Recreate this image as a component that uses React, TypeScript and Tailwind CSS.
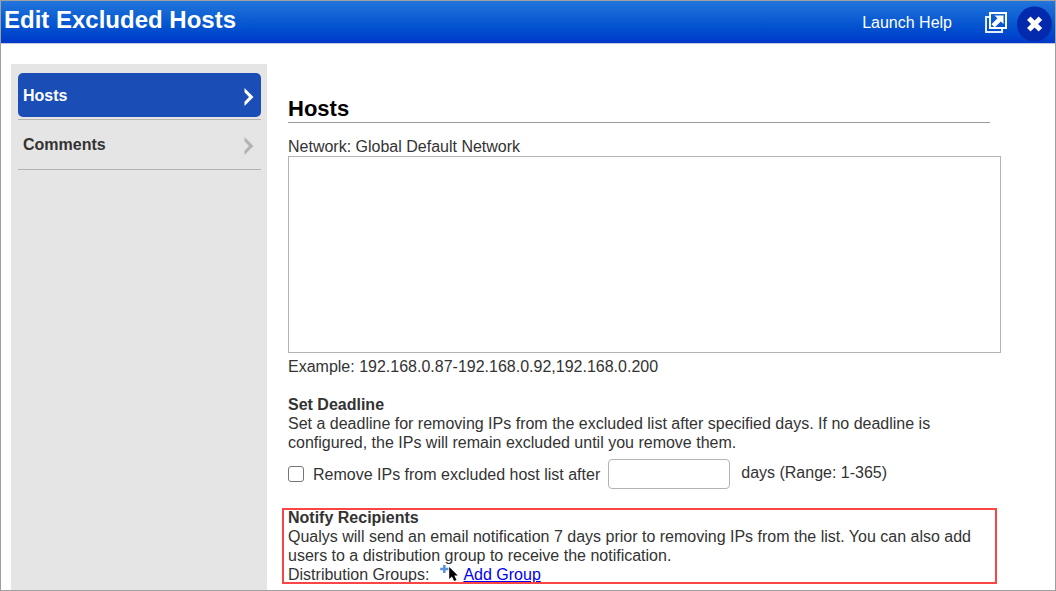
import { useState } from "react";

const sections = ["Hosts", "Comments"];

const PopOutIcon = () => (
  <svg width="22" height="21" viewBox="0 0 22 21" fill="none" aria-hidden="true">
    <path d="M4 5H1V20H17V17" stroke="#e4edfb" strokeWidth="2" />
    <rect x="5" y="1" width="16" height="15" stroke="#fff" strokeWidth="2" />
    <path d="M9.5 3.5h9V12l-2.8-2.6-6 6L6.5 12.2l6-6z" fill="#fff" />
  </svg>
);

const CloseIcon = () => (
  <svg width="35" height="36" viewBox="0 0 35 36" fill="none" aria-hidden="true">
    <circle cx="17.5" cy="18" r="17.5" fill="#0329ac" />
    <path d="M11.8 12.2L23.4 23.8M23.4 12.2L11.8 23.8" stroke="#fff" strokeWidth="5" />
  </svg>
);

const ChevronIcon = () => (
  <svg width="10" height="18" viewBox="0 0 10 18" fill="currentColor" aria-hidden="true">
    <path d="M0.5 0L9.5 9L0.5 18V13.8L5 9L0.5 4.2z" />
  </svg>
);

const AddCursorIcon = () => (
  <svg width="18" height="17" viewBox="0 0 18 17" aria-hidden="true">
    <path d="M3 0h2.6v2.8H8.4v2.4H5.6V8H3V5.2H0.2V2.8H3z" fill="#5b93dc" />
    <path d="M9.2 2v12l2.7-2.5 2.3 4.6 2.3-1.1-2.2-4.4h3.5z" fill="#000" />
  </svg>
);

const App = () => {
  const [active, setActive] = useState("Hosts");

  return (
    <div className="flex min-h-screen flex-col border border-[#a0a0a0] bg-white font-['Liberation_Sans',Arial,sans-serif] text-base leading-[19px] text-[#333]">
      <header className="flex h-[43px] items-center border-b border-[#c3cbdd] bg-linear-to-b from-[#2175da] to-[#0038c9] px-[3px] text-white">
        <h1 className="flex-1 pb-1 text-2xl font-bold">Edit Excluded Hosts</h1>
        <a href="#help" className="mr-[33px]">Launch Help</a>
        <button type="button" aria-label="Open in new window" className="mr-[10px]">
          <PopOutIcon />
        </button>
        <button type="button" aria-label="Close" className="pt-1">
          <CloseIcon />
        </button>
      </header>

      <div className="flex flex-1 pl-[10px]">
        <nav className="mt-5 w-64 shrink-0 bg-[#e5e5e5] pl-[7px] pr-[6px] pt-[9px]">
          <ul>
            {sections.map((name) => (
              <li key={name} className="mb-[2px] border-b border-[#b3b3b3] pb-[2px] last:pb-[3px]">
                <button
                  type="button"
                  onClick={() => setActive(name)}
                  className={`flex h-11 w-full items-center justify-between rounded-[5px] pl-[5px] pr-[7px] font-bold ${
                    active === name ? "bg-[#1a4db5] text-white" : "text-[#333]"
                  }`}
                >
                  <span>{name}</span>
                  <span className={active === name ? "pt-1" : "pt-1 text-[#b3b3b3]"}>
                    <ChevronIcon />
                  </span>
                </button>
              </li>
            ))}
          </ul>
        </nav>

        <main className="flex-1 pb-[6px] pl-[21px] pr-[54px] pt-[51px]">
          <h2 className="mr-[11px] border-b border-[#999] text-[22px] font-bold leading-[27px] text-black">
            Hosts
          </h2>

          <label htmlFor="hosts" className="mt-[14px] block">
            Network: Global Default Network
          </label>
          <textarea
            id="hosts"
            className="block h-[197px] w-full resize-none border border-[#b3b3b3] p-1 outline-none"
          />
          <p className="mt-1">Example: 192.168.0.87-192.168.0.92,192.168.0.200</p>

          <h3 className="mt-[19px] font-bold">Set Deadline</h3>
          <p className="mr-[11px]">
            Set a deadline for removing IPs from the excluded list after specified days. If no deadline is
            configured, the IPs will remain excluded until you remove them.
          </p>
          <div className="mt-[7px] flex items-center">
            <input
              id="deadline"
              type="checkbox"
              className="size-4 appearance-none rounded-[3px] border border-[#767676] bg-white checked:bg-[#1a4db5]"
            />
            <label htmlFor="deadline" className="ml-[9px] mr-2">
              Remove IPs from excluded host list after
            </label>
            <input
              id="days"
              type="text"
              className="h-[30px] w-[122px] rounded-[4px] border border-[#b3b3b3] px-2 outline-none"
            />
            <label htmlFor="days" className="ml-[11px] pb-[3px]">days (Range: 1-365)</label>
          </div>

          <section className="-ml-[6px] mr-1 mt-[19px] px-[6px] outline-2 -outline-offset-2 outline-[#fb4444]">
            <h3 className="font-bold">Notify Recipients</h3>
            <p>
              Qualys will send an email notification 7 days prior to removing IPs from the list. You can also add
              users to a distribution group to receive the notification.
            </p>
            <div className="flex">
              <span className="mr-[11px]">Distribution Groups:</span>
              <AddCursorIcon />
              <a href="#add-group" className="ml-[5px] text-[#0000ee] underline">Add Group</a>
            </div>
          </section>
        </main>
      </div>
    </div>
  );
};

export default App;
